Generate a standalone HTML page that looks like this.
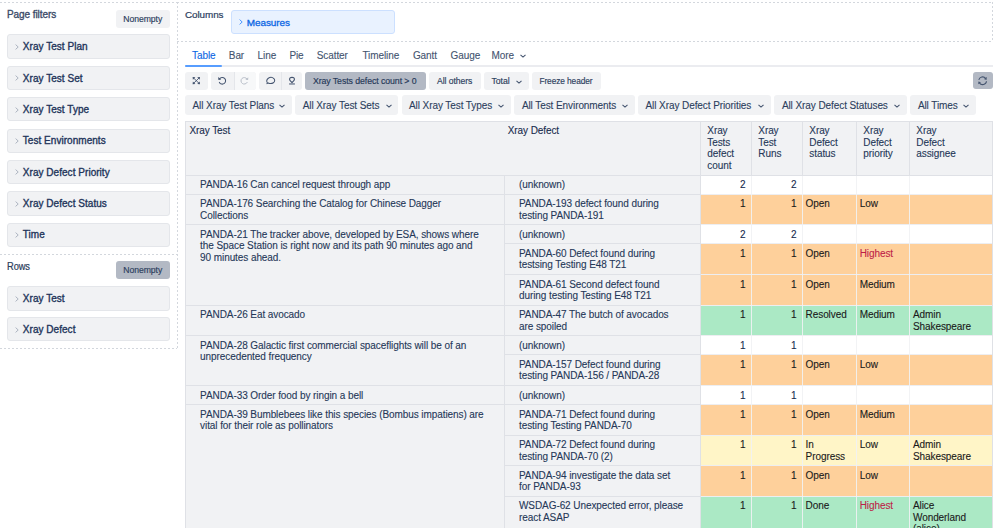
<!DOCTYPE html>
<html><head><meta charset="utf-8"><style>
html,body{margin:0;padding:0;background:#fff;width:999px;height:528px;overflow:hidden;position:relative}
body{font-family:"Liberation Sans",sans-serif;color:#172B4D;font-size:10px;letter-spacing:-0.08px;-webkit-text-stroke-width:0.1px}
body>div{position:absolute}
.t{white-space:nowrap;line-height:11.6px}
svg{display:block}
</style></head><body>
<div style="left:0px;top:2px;width:177px;height:1px;background:repeating-linear-gradient(90deg,#D3D7DD 0 2px,transparent 2px 4px)"></div>
<div style="left:177px;top:2px;width:1px;height:347px;background:repeating-linear-gradient(180deg,#D3D7DD 0 2px,transparent 2px 4px)"></div>
<div style="left:0px;top:254px;width:177px;height:1px;background:repeating-linear-gradient(90deg,#D3D7DD 0 2px,transparent 2px 4px)"></div>
<div style="left:0px;top:348px;width:177px;height:1px;background:repeating-linear-gradient(90deg,#D3D7DD 0 2px,transparent 2px 4px)"></div>
<div class="t" style="left:7px;top:9.2px;font-size:10px;color:#3B4B68;-webkit-text-stroke:0.34px #3B4B68">Page filters</div>
<div style="left:115.5px;top:10px;width:54.5px;height:17.5px;background:#F1F2F4;border-radius:3px"></div>
<div class="t" style="left:115.5px;top:13.6px;width:54.5px;text-align:center;font-size:8.67px;color:#2C3E5D;-webkit-text-stroke:0.15px #2C3E5D">Nonempty</div>
<div style="left:7px;top:34.4px;width:163px;height:24.3px;background:#F1F2F4;border:1px solid #E4E6EA;border-radius:3px;box-sizing:border-box"></div>
<div style="left:15px;top:43.8px;width:4px;height:6px;color:#A5ADBA"><svg width="4" height="6" viewBox="0 0 4 6"><path d="M0.6 0.6 L3.2 3 L0.6 5.4" fill="none" stroke="currentColor" stroke-width="0.9"/></svg></div>
<div class="t" style="left:22.8px;top:41.4px;font-size:10px;color:#22345A;-webkit-text-stroke:0.34px #22345A;letter-spacing:0.04px">Xray Test Plan</div>
<div style="left:7px;top:65.8px;width:163px;height:24.3px;background:#F1F2F4;border:1px solid #E4E6EA;border-radius:3px;box-sizing:border-box"></div>
<div style="left:15px;top:75.2px;width:4px;height:6px;color:#A5ADBA"><svg width="4" height="6" viewBox="0 0 4 6"><path d="M0.6 0.6 L3.2 3 L0.6 5.4" fill="none" stroke="currentColor" stroke-width="0.9"/></svg></div>
<div class="t" style="left:22.8px;top:73.4px;font-size:10px;color:#22345A;-webkit-text-stroke:0.34px #22345A;letter-spacing:0.04px">Xray Test Set</div>
<div style="left:7px;top:97.19999999999999px;width:163px;height:24.3px;background:#F1F2F4;border:1px solid #E4E6EA;border-radius:3px;box-sizing:border-box"></div>
<div style="left:15px;top:106.6px;width:4px;height:6px;color:#A5ADBA"><svg width="4" height="6" viewBox="0 0 4 6"><path d="M0.6 0.6 L3.2 3 L0.6 5.4" fill="none" stroke="currentColor" stroke-width="0.9"/></svg></div>
<div class="t" style="left:22.8px;top:104.4px;font-size:10px;color:#22345A;-webkit-text-stroke:0.34px #22345A;letter-spacing:0.04px">Xray Test Type</div>
<div style="left:7px;top:128.6px;width:163px;height:24.3px;background:#F1F2F4;border:1px solid #E4E6EA;border-radius:3px;box-sizing:border-box"></div>
<div style="left:15px;top:138.0px;width:4px;height:6px;color:#A5ADBA"><svg width="4" height="6" viewBox="0 0 4 6"><path d="M0.6 0.6 L3.2 3 L0.6 5.4" fill="none" stroke="currentColor" stroke-width="0.9"/></svg></div>
<div class="t" style="left:22.8px;top:135.4px;font-size:10px;color:#22345A;-webkit-text-stroke:0.34px #22345A;letter-spacing:0.04px">Test Environments</div>
<div style="left:7px;top:160.0px;width:163px;height:24.3px;background:#F1F2F4;border:1px solid #E4E6EA;border-radius:3px;box-sizing:border-box"></div>
<div style="left:15px;top:169.4px;width:4px;height:6px;color:#A5ADBA"><svg width="4" height="6" viewBox="0 0 4 6"><path d="M0.6 0.6 L3.2 3 L0.6 5.4" fill="none" stroke="currentColor" stroke-width="0.9"/></svg></div>
<div class="t" style="left:22.8px;top:167.4px;font-size:10px;color:#22345A;-webkit-text-stroke:0.34px #22345A;letter-spacing:0.04px">Xray Defect Priority</div>
<div style="left:7px;top:191.4px;width:163px;height:24.3px;background:#F1F2F4;border:1px solid #E4E6EA;border-radius:3px;box-sizing:border-box"></div>
<div style="left:15px;top:200.8px;width:4px;height:6px;color:#A5ADBA"><svg width="4" height="6" viewBox="0 0 4 6"><path d="M0.6 0.6 L3.2 3 L0.6 5.4" fill="none" stroke="currentColor" stroke-width="0.9"/></svg></div>
<div class="t" style="left:22.8px;top:198.4px;font-size:10px;color:#22345A;-webkit-text-stroke:0.34px #22345A;letter-spacing:0.04px">Xray Defect Status</div>
<div style="left:7px;top:222.79999999999998px;width:163px;height:24.3px;background:#F1F2F4;border:1px solid #E4E6EA;border-radius:3px;box-sizing:border-box"></div>
<div style="left:15px;top:232.2px;width:4px;height:6px;color:#A5ADBA"><svg width="4" height="6" viewBox="0 0 4 6"><path d="M0.6 0.6 L3.2 3 L0.6 5.4" fill="none" stroke="currentColor" stroke-width="0.9"/></svg></div>
<div class="t" style="left:22.8px;top:229.4px;font-size:10px;color:#22345A;-webkit-text-stroke:0.34px #22345A;letter-spacing:0.04px">Time</div>
<div class="t" style="left:7px;top:261.3px;font-size:9.3px;color:#2C3E5D;-webkit-text-stroke:0.2px #2C3E5D;transform:scaleY(1.12);transform-origin:0 0">Rows</div>
<div style="left:115.5px;top:261.3px;width:54.5px;height:17.5px;background:#B3B9C4;border-radius:3px"></div>
<div class="t" style="left:115.5px;top:264.6px;width:54.5px;text-align:center;font-size:8.67px;color:#2C3E5D;-webkit-text-stroke:0.15px #2C3E5D">Nonempty</div>
<div style="left:7px;top:286.3px;width:163px;height:24.3px;background:#F1F2F4;border:1px solid #E4E6EA;border-radius:3px;box-sizing:border-box"></div>
<div style="left:15px;top:295.7px;width:4px;height:6px;color:#A5ADBA"><svg width="4" height="6" viewBox="0 0 4 6"><path d="M0.6 0.6 L3.2 3 L0.6 5.4" fill="none" stroke="currentColor" stroke-width="0.9"/></svg></div>
<div class="t" style="left:22.8px;top:293.4px;font-size:10px;color:#22345A;-webkit-text-stroke:0.34px #22345A;letter-spacing:0.04px">Xray Test</div>
<div style="left:7px;top:317.2px;width:163px;height:24.3px;background:#F1F2F4;border:1px solid #E4E6EA;border-radius:3px;box-sizing:border-box"></div>
<div style="left:15px;top:326.59999999999997px;width:4px;height:6px;color:#A5ADBA"><svg width="4" height="6" viewBox="0 0 4 6"><path d="M0.6 0.6 L3.2 3 L0.6 5.4" fill="none" stroke="currentColor" stroke-width="0.9"/></svg></div>
<div class="t" style="left:22.8px;top:324.4px;font-size:10px;color:#22345A;-webkit-text-stroke:0.34px #22345A;letter-spacing:0.04px">Xray Defect</div>
<div style="left:177px;top:2px;width:816px;height:1px;background:repeating-linear-gradient(90deg,#D3D7DD 0 2px,transparent 2px 4px)"></div>
<div style="left:992px;top:2px;width:1px;height:40px;background:repeating-linear-gradient(180deg,#D3D7DD 0 2px,transparent 2px 4px)"></div>
<div style="left:177px;top:41px;width:816px;height:1px;background:repeating-linear-gradient(90deg,#D3D7DD 0 2px,transparent 2px 4px)"></div>
<div class="t" style="left:185px;top:9.2px;font-size:9.9px;color:#2C3E5D;-webkit-text-stroke:0.2px #2C3E5D">Columns</div>
<div style="left:231px;top:10px;width:163.5px;height:24px;background:#E9F2FF;border:1px solid #CCE0FF;border-radius:3px;box-sizing:border-box"></div>
<div style="left:239px;top:19px;width:4px;height:6px;color:#388BFF"><svg width="4" height="6" viewBox="0 0 4 6"><path d="M0.6 0.6 L3.2 3 L0.6 5.4" fill="none" stroke="currentColor" stroke-width="0.9"/></svg></div>
<div class="t" style="left:246.8px;top:16.8px;font-size:9.95px;color:#0C66E4;-webkit-text-stroke:0.3px #0C66E4">Measures</div>
<div class="t" style="left:192.1px;top:50.3px;font-size:10px;letter-spacing:-0.08px;-webkit-text-stroke-width:0.1px;color:#0C66E4">Table</div>
<div class="t" style="left:228.8px;top:50.3px;font-size:10px;letter-spacing:-0.08px;-webkit-text-stroke-width:0.1px;color:#44546F">Bar</div>
<div class="t" style="left:257.6px;top:50.3px;font-size:10px;letter-spacing:-0.08px;-webkit-text-stroke-width:0.1px;color:#44546F">Line</div>
<div class="t" style="left:289.4px;top:50.3px;font-size:10px;letter-spacing:-0.08px;-webkit-text-stroke-width:0.1px;color:#44546F">Pie</div>
<div class="t" style="left:316.7px;top:50.3px;font-size:10px;letter-spacing:-0.08px;-webkit-text-stroke-width:0.1px;color:#44546F">Scatter</div>
<div class="t" style="left:362.4px;top:50.3px;font-size:10px;letter-spacing:-0.08px;-webkit-text-stroke-width:0.1px;color:#44546F">Timeline</div>
<div class="t" style="left:412.9px;top:50.3px;font-size:10px;letter-spacing:-0.08px;-webkit-text-stroke-width:0.1px;color:#44546F">Gantt</div>
<div class="t" style="left:450.6px;top:50.3px;font-size:10px;letter-spacing:-0.08px;-webkit-text-stroke-width:0.1px;color:#44546F">Gauge</div>
<div class="t" style="left:491.6px;top:50.3px;font-size:10px;letter-spacing:-0.08px;-webkit-text-stroke-width:0.1px;color:#44546F">More</div>
<div style="left:519.5px;top:53.5px;width:6px;height:4px;color:#44546F"><svg width="6" height="4" viewBox="0 0 6 4"><path d="M0.5 0.8 L3 3.1 L5.5 0.8" fill="none" stroke="currentColor" stroke-width="1.1"/></svg></div>
<div style="left:185px;top:65.2px;width:808px;height:2px;background:#EBECF0"></div>
<div style="left:185px;top:65px;width:37px;height:2px;background:#579DFF;border-radius:1px"></div>
<div style="left:185px;top:72px;width:22.5px;height:17.5px;background:#F1F2F4;border-radius:3px"></div>
<div style="left:211px;top:72px;width:44.5px;height:17.5px;background:#F1F2F4;border-radius:3px"></div>
<div style="left:233.5px;top:72px;width:22px;height:17.5px;background:#F7F8F9;border-radius:0 3px 3px 0;border-left:1px solid #E4E6EA;box-sizing:border-box"></div>
<div style="left:259px;top:72px;width:43px;height:17.5px;background:#F1F2F4;border-radius:3px"></div>
<div style="left:281.3px;top:72px;width:1px;height:17.5px;background:#E4E6EA"></div>
<div style="left:188px;top:73px;width:16px;height:16px"><svg width="16" height="16" viewBox="0 0 16 16"><path d="M5.6 5 L11 10.3 M11 5 L5.6 10.3" stroke="#44546F" stroke-width="0.9" fill="none"/><path d="M4.6 4 L7.4 4.3 L4.9 6.8 Z M12 4 L9.2 4.3 L11.7 6.8 Z M4.6 11.3 L7.4 11 L4.9 8.5 Z M12 11.3 L9.2 11 L11.7 8.5 Z" fill="#44546F"/></svg></div>
<div style="left:214px;top:73px;width:16px;height:16px"><svg width="16" height="16" viewBox="0 0 16 16"><path d="M5.6 5.9 A3.3 3.3 0 1 1 5.4 9.4" stroke="#44546F" stroke-width="1.05" fill="none" stroke-linecap="round"/><path d="M4.2 4.1 L4.4 7 L7.2 6.6 Z" fill="#44546F"/></svg></div>
<div style="left:237px;top:73px;width:16px;height:16px"><svg width="16" height="16" viewBox="0 0 16 16"><path d="M10 5.9 A3.3 3.3 0 1 0 10.2 9.4" stroke="#B9BFC9" stroke-width="1" fill="none" stroke-linecap="round"/><path d="M11.3 4.3 L11.1 7.1 L8.4 6.7 Z" fill="#B9BFC9"/></svg></div>
<div style="left:262px;top:73px;width:16px;height:16px"><svg width="16" height="16" viewBox="0 0 16 16"><path d="M5.6 10.1 C4.3 8.9 4.4 6.4 6.3 5.2 C8 4.1 10.6 4.3 11.9 5.6 C13.1 6.8 12.9 8.7 11.4 9.7 C9.9 10.7 7.6 10.6 6.3 10 L4.9 10.6 Z" stroke="#44546F" stroke-width="1.05" fill="none" stroke-linejoin="round"/></svg></div>
<div style="left:284px;top:73px;width:16px;height:16px"><svg width="16" height="16" viewBox="0 0 16 16"><path d="M8 4.3 C6.3 4.3 5.5 5.3 5.6 6.5 C5.7 7.3 6.4 8 7.1 8.7 L8 9.6 L8.9 8.7 C9.6 8 10.3 7.3 10.4 6.5 C10.5 5.3 9.7 4.3 8 4.3 Z" stroke="#44546F" stroke-width="1.15" fill="none"/><rect x="5.1" y="10.3" width="5.8" height="1.3" fill="#6B778C"/></svg></div>
<div class="t" style="left:0px;top:0px;"></div>
<div style="left:305.3px;top:72px;width:121px;height:17.5px;background:#B3B9C4;border-radius:3px"></div>
<div class="t" style="left:312.9px;top:75.5px;font-size:8.78px;color:#253858;-webkit-text-stroke-width:0.15px">Xray Tests defect count &gt; 0</div>
<div style="left:429.4px;top:72px;width:51.2px;height:17.5px;background:#F1F2F4;border-radius:3px"></div>
<div class="t" style="left:437px;top:75.5px;font-size:8.64px;color:#2C3E5D;-webkit-text-stroke-width:0.15px">All others</div>
<div style="left:484px;top:72px;width:44.6px;height:17.5px;background:#F1F2F4;border-radius:3px"></div>
<div class="t" style="left:491.6px;top:75.5px;font-size:8.7px;color:#2C3E5D;-webkit-text-stroke-width:0.15px">Total</div>
<div style="left:516px;top:79.5px;width:6px;height:4px;color:#44546F"><svg width="6" height="4" viewBox="0 0 6 4"><path d="M0.5 0.8 L3 3.1 L5.5 0.8" fill="none" stroke="currentColor" stroke-width="1.1"/></svg></div>
<div style="left:531.6px;top:72px;width:69.8px;height:17.5px;background:#F1F2F4;border-radius:3px"></div>
<div class="t" style="left:539.4px;top:75.5px;font-size:8.33px;color:#2C3E5D;-webkit-text-stroke-width:0.15px">Freeze header</div>
<div style="left:973px;top:72.3px;width:19.6px;height:16.8px;background:#B3B9C4;border-radius:3px"></div>
<div style="left:972px;top:71px;width:22px;height:20px"><svg width="22" height="20" viewBox="0 0 22 20"><path d="M6.8 8.9 A3.9 3.9 0 0 1 13.6 7.3" stroke="#44546F" stroke-width="1.05" fill="none"/><path d="M14.5 10.2 A3.9 3.9 0 0 1 7.4 11.9" stroke="#44546F" stroke-width="1.05" fill="none"/><path d="M14.8 6 L14.5 8.9 L11.9 7.9 Z M6.2 13.3 L6.4 10.4 L9 11.3 Z" fill="#44546F"/></svg></div>
<div style="left:185px;top:95.4px;width:107.10000000000002px;height:19.5px;background:#F1F2F4;border-radius:3px"></div>
<div class="t" style="left:192.5px;top:100.3px;font-size:10px;letter-spacing:-0.08px;-webkit-text-stroke-width:0.1px;color:#2C3E5D">All Xray Test Plans</div>
<div style="left:279.1px;top:103.5px;width:6px;height:4px;color:#44546F"><svg width="6" height="4" viewBox="0 0 6 4"><path d="M0.5 0.8 L3 3.1 L5.5 0.8" fill="none" stroke="currentColor" stroke-width="1.1"/></svg></div>
<div style="left:295.2px;top:95.4px;width:103.30000000000001px;height:19.5px;background:#F1F2F4;border-radius:3px"></div>
<div class="t" style="left:302.7px;top:100.3px;font-size:10px;letter-spacing:-0.08px;-webkit-text-stroke-width:0.1px;color:#2C3E5D">All Xray Test Sets</div>
<div style="left:385.5px;top:103.5px;width:6px;height:4px;color:#44546F"><svg width="6" height="4" viewBox="0 0 6 4"><path d="M0.5 0.8 L3 3.1 L5.5 0.8" fill="none" stroke="currentColor" stroke-width="1.1"/></svg></div>
<div style="left:401.5px;top:95.4px;width:109.5px;height:19.5px;background:#F1F2F4;border-radius:3px"></div>
<div class="t" style="left:409.0px;top:100.3px;font-size:10px;letter-spacing:-0.08px;-webkit-text-stroke-width:0.1px;color:#2C3E5D">All Xray Test Types</div>
<div style="left:498px;top:103.5px;width:6px;height:4px;color:#44546F"><svg width="6" height="4" viewBox="0 0 6 4"><path d="M0.5 0.8 L3 3.1 L5.5 0.8" fill="none" stroke="currentColor" stroke-width="1.1"/></svg></div>
<div style="left:514.4px;top:95.4px;width:120.60000000000002px;height:19.5px;background:#F1F2F4;border-radius:3px"></div>
<div class="t" style="left:521.9px;top:100.3px;font-size:10px;letter-spacing:-0.08px;-webkit-text-stroke-width:0.1px;color:#2C3E5D">All Test Environments</div>
<div style="left:622px;top:103.5px;width:6px;height:4px;color:#44546F"><svg width="6" height="4" viewBox="0 0 6 4"><path d="M0.5 0.8 L3 3.1 L5.5 0.8" fill="none" stroke="currentColor" stroke-width="1.1"/></svg></div>
<div style="left:638px;top:95.4px;width:133.39999999999998px;height:19.5px;background:#F1F2F4;border-radius:3px"></div>
<div class="t" style="left:645.5px;top:100.3px;font-size:10px;letter-spacing:-0.08px;-webkit-text-stroke-width:0.1px;color:#2C3E5D">All Xray Defect Priorities</div>
<div style="left:758.4px;top:103.5px;width:6px;height:4px;color:#44546F"><svg width="6" height="4" viewBox="0 0 6 4"><path d="M0.5 0.8 L3 3.1 L5.5 0.8" fill="none" stroke="currentColor" stroke-width="1.1"/></svg></div>
<div style="left:774.4px;top:95.4px;width:132.60000000000002px;height:19.5px;background:#F1F2F4;border-radius:3px"></div>
<div class="t" style="left:781.9px;top:100.3px;font-size:10px;letter-spacing:-0.08px;-webkit-text-stroke-width:0.1px;color:#2C3E5D">All Xray Defect Statuses</div>
<div style="left:894px;top:103.5px;width:6px;height:4px;color:#44546F"><svg width="6" height="4" viewBox="0 0 6 4"><path d="M0.5 0.8 L3 3.1 L5.5 0.8" fill="none" stroke="currentColor" stroke-width="1.1"/></svg></div>
<div style="left:910.4px;top:95.4px;width:65.89999999999998px;height:19.5px;background:#F1F2F4;border-radius:3px"></div>
<div class="t" style="left:917.9px;top:100.3px;font-size:10px;letter-spacing:-0.08px;-webkit-text-stroke-width:0.1px;color:#2C3E5D">All Times</div>
<div style="left:963.3px;top:103.5px;width:6px;height:4px;color:#44546F"><svg width="6" height="4" viewBox="0 0 6 4"><path d="M0.5 0.8 L3 3.1 L5.5 0.8" fill="none" stroke="currentColor" stroke-width="1.1"/></svg></div>
<div style="left:185px;top:121.3px;width:807.2px;height:53.89999999999999px;background:#F1F2F4"></div>
<div class="t" style="left:189.4px;top:125.3px;font-size:10px;letter-spacing:-0.08px;-webkit-text-stroke-width:0.1px">Xray Test</div>
<div class="t" style="left:507.7px;top:125.3px;font-size:10px;letter-spacing:-0.08px;-webkit-text-stroke-width:0.1px">Xray Defect</div>
<div class="t" style="left:707.3px;top:125.30px;font-size:10px;letter-spacing:-0.08px;color:#253858">Xray</div>
<div class="t" style="left:707.3px;top:136.80px;font-size:10px;letter-spacing:-0.08px;color:#253858">Tests</div>
<div class="t" style="left:707.3px;top:148.30px;font-size:10px;letter-spacing:-0.08px;color:#253858">defect</div>
<div class="t" style="left:707.3px;top:159.80px;font-size:10px;letter-spacing:-0.08px;color:#253858">count</div>
<div class="t" style="left:758.3px;top:125.30px;font-size:10px;letter-spacing:-0.08px;color:#253858">Xray</div>
<div class="t" style="left:758.3px;top:136.80px;font-size:10px;letter-spacing:-0.08px;color:#253858">Test</div>
<div class="t" style="left:758.3px;top:148.30px;font-size:10px;letter-spacing:-0.08px;color:#253858">Runs</div>
<div class="t" style="left:809.3px;top:125.30px;font-size:10px;letter-spacing:-0.08px;color:#253858">Xray</div>
<div class="t" style="left:809.3px;top:136.80px;font-size:10px;letter-spacing:-0.08px;color:#253858">Defect</div>
<div class="t" style="left:809.3px;top:148.30px;font-size:10px;letter-spacing:-0.08px;color:#253858">status</div>
<div class="t" style="left:863.3px;top:125.30px;font-size:10px;letter-spacing:-0.08px;color:#253858">Xray</div>
<div class="t" style="left:863.3px;top:136.80px;font-size:10px;letter-spacing:-0.08px;color:#253858">Defect</div>
<div class="t" style="left:863.3px;top:148.30px;font-size:10px;letter-spacing:-0.08px;color:#253858">priority</div>
<div class="t" style="left:916.3px;top:125.30px;font-size:10px;letter-spacing:-0.08px;color:#253858">Xray</div>
<div class="t" style="left:916.3px;top:136.80px;font-size:10px;letter-spacing:-0.08px;color:#253858">Defect</div>
<div class="t" style="left:916.3px;top:148.30px;font-size:10px;letter-spacing:-0.08px;color:#253858">assignee</div>
<div style="left:185px;top:175.2px;width:515px;height:352.8px;background:#F1F2F4"></div>
<div style="left:700px;top:175.2px;width:292.2px;height:18.80000000000001px;background:#FFFFFF"></div>
<div class="t" style="left:700px;top:179.29999999999998px;width:45.6px;text-align:right;font-size:10px;letter-spacing:-0.08px;-webkit-text-stroke-width:0.1px;color:#172B4D">2</div>
<div class="t" style="left:751px;top:179.29999999999998px;width:45.6px;text-align:right;font-size:10px;letter-spacing:-0.08px;-webkit-text-stroke-width:0.1px;color:#172B4D">2</div>
<div class="t" style="left:805.6px;top:179.29999999999998px;font-size:10px;letter-spacing:-0.08px;color:#253858;color:#172B4D"></div>
<div class="t" style="left:859.7px;top:179.29999999999998px;font-size:10px;letter-spacing:-0.08px;color:#253858;color:#172B4D"></div>
<div class="t" style="left:913px;top:179.29999999999998px;font-size:10px;letter-spacing:-0.08px;color:#253858;color:#172B4D"></div>
<div class="t" style="left:519px;top:179.29999999999998px;font-size:10px;letter-spacing:-0.08px;color:#253858">(unknown)</div>
<div style="left:504px;top:174.7px;width:196px;height:1px;background:#DFE1E6"></div>
<div style="left:700px;top:174.7px;width:292.2px;height:1px;background:#EDEEF1"></div>
<div style="left:700px;top:194.0px;width:292.2px;height:30.599999999999994px;background:#FED09B"></div>
<div class="t" style="left:700px;top:198.1px;width:45.6px;text-align:right;font-size:10px;letter-spacing:-0.08px;-webkit-text-stroke-width:0.1px;color:#1A1A1A">1</div>
<div class="t" style="left:751px;top:198.1px;width:45.6px;text-align:right;font-size:10px;letter-spacing:-0.08px;-webkit-text-stroke-width:0.1px;color:#1A1A1A">1</div>
<div class="t" style="left:805.6px;top:198.1px;font-size:10px;letter-spacing:-0.08px;color:#253858;color:#1A1A1A">Open</div>
<div class="t" style="left:859.7px;top:198.1px;font-size:10px;letter-spacing:-0.08px;color:#253858;color:#1A1A1A">Low</div>
<div class="t" style="left:913px;top:198.1px;font-size:10px;letter-spacing:-0.08px;color:#253858;color:#1A1A1A"></div>
<div class="t" style="left:519px;top:198.10px;font-size:10px;letter-spacing:-0.08px;color:#253858">PANDA-193 defect found during</div>
<div class="t" style="left:519px;top:209.60px;font-size:10px;letter-spacing:-0.08px;color:#253858">testing PANDA-191</div>
<div style="left:504px;top:193.5px;width:196px;height:1px;background:#DFE1E6"></div>
<div style="left:700px;top:193.5px;width:292.2px;height:1px;background:#EDEEF1"></div>
<div style="left:700px;top:224.6px;width:292.2px;height:19.0px;background:#FFFFFF"></div>
<div class="t" style="left:700px;top:228.7px;width:45.6px;text-align:right;font-size:10px;letter-spacing:-0.08px;-webkit-text-stroke-width:0.1px;color:#172B4D">2</div>
<div class="t" style="left:751px;top:228.7px;width:45.6px;text-align:right;font-size:10px;letter-spacing:-0.08px;-webkit-text-stroke-width:0.1px;color:#172B4D">2</div>
<div class="t" style="left:805.6px;top:228.7px;font-size:10px;letter-spacing:-0.08px;color:#253858;color:#172B4D"></div>
<div class="t" style="left:859.7px;top:228.7px;font-size:10px;letter-spacing:-0.08px;color:#253858;color:#172B4D"></div>
<div class="t" style="left:913px;top:228.7px;font-size:10px;letter-spacing:-0.08px;color:#253858;color:#172B4D"></div>
<div class="t" style="left:519px;top:228.7px;font-size:10px;letter-spacing:-0.08px;color:#253858">(unknown)</div>
<div style="left:504px;top:224.1px;width:196px;height:1px;background:#DFE1E6"></div>
<div style="left:700px;top:224.1px;width:292.2px;height:1px;background:#EDEEF1"></div>
<div style="left:700px;top:243.6px;width:292.2px;height:30.900000000000006px;background:#FED09B"></div>
<div class="t" style="left:700px;top:247.7px;width:45.6px;text-align:right;font-size:10px;letter-spacing:-0.08px;-webkit-text-stroke-width:0.1px;color:#1A1A1A">1</div>
<div class="t" style="left:751px;top:247.7px;width:45.6px;text-align:right;font-size:10px;letter-spacing:-0.08px;-webkit-text-stroke-width:0.1px;color:#1A1A1A">1</div>
<div class="t" style="left:805.6px;top:247.7px;font-size:10px;letter-spacing:-0.08px;color:#253858;color:#1A1A1A">Open</div>
<div class="t" style="left:859.7px;top:247.7px;font-size:10px;letter-spacing:-0.08px;color:#253858;color:#1A1A1A"><span style="color:#BE1F48">Highest</span></div>
<div class="t" style="left:913px;top:247.7px;font-size:10px;letter-spacing:-0.08px;color:#253858;color:#1A1A1A"></div>
<div class="t" style="left:519px;top:247.70px;font-size:10px;letter-spacing:-0.08px;color:#253858">PANDA-60 Defect found during</div>
<div class="t" style="left:519px;top:259.20px;font-size:10px;letter-spacing:-0.08px;color:#253858">testsing Testing E48 T21</div>
<div style="left:504px;top:243.1px;width:196px;height:1px;background:#DFE1E6"></div>
<div style="left:700px;top:243.1px;width:292.2px;height:1px;background:#EDEEF1"></div>
<div style="left:700px;top:274.5px;width:292.2px;height:30.69999999999999px;background:#FED09B"></div>
<div class="t" style="left:700px;top:278.6px;width:45.6px;text-align:right;font-size:10px;letter-spacing:-0.08px;-webkit-text-stroke-width:0.1px;color:#1A1A1A">1</div>
<div class="t" style="left:751px;top:278.6px;width:45.6px;text-align:right;font-size:10px;letter-spacing:-0.08px;-webkit-text-stroke-width:0.1px;color:#1A1A1A">1</div>
<div class="t" style="left:805.6px;top:278.6px;font-size:10px;letter-spacing:-0.08px;color:#253858;color:#1A1A1A">Open</div>
<div class="t" style="left:859.7px;top:278.6px;font-size:10px;letter-spacing:-0.08px;color:#253858;color:#1A1A1A">Medium</div>
<div class="t" style="left:913px;top:278.6px;font-size:10px;letter-spacing:-0.08px;color:#253858;color:#1A1A1A"></div>
<div class="t" style="left:519px;top:278.60px;font-size:10px;letter-spacing:-0.08px;color:#253858">PANDA-61 Second defect found</div>
<div class="t" style="left:519px;top:290.10px;font-size:10px;letter-spacing:-0.08px;color:#253858">during testing Testing E48 T21</div>
<div style="left:504px;top:274.0px;width:196px;height:1px;background:#DFE1E6"></div>
<div style="left:700px;top:274.0px;width:292.2px;height:1px;background:#EDEEF1"></div>
<div style="left:700px;top:305.2px;width:292.2px;height:30.19999999999999px;background:#ABE9C5"></div>
<div class="t" style="left:700px;top:309.3px;width:45.6px;text-align:right;font-size:10px;letter-spacing:-0.08px;-webkit-text-stroke-width:0.1px;color:#1A1A1A">1</div>
<div class="t" style="left:751px;top:309.3px;width:45.6px;text-align:right;font-size:10px;letter-spacing:-0.08px;-webkit-text-stroke-width:0.1px;color:#1A1A1A">1</div>
<div class="t" style="left:805.6px;top:309.3px;font-size:10px;letter-spacing:-0.08px;color:#253858;color:#1A1A1A">Resolved</div>
<div class="t" style="left:859.7px;top:309.3px;font-size:10px;letter-spacing:-0.08px;color:#253858;color:#1A1A1A">Medium</div>
<div class="t" style="left:913px;top:309.30px;font-size:10px;letter-spacing:-0.08px;color:#253858;color:#1A1A1A">Admin</div>
<div class="t" style="left:913px;top:320.80px;font-size:10px;letter-spacing:-0.08px;color:#253858;color:#1A1A1A">Shakespeare</div>
<div class="t" style="left:519px;top:309.30px;font-size:10px;letter-spacing:-0.08px;color:#253858">PANDA-47 The butch of avocados</div>
<div class="t" style="left:519px;top:320.80px;font-size:10px;letter-spacing:-0.08px;color:#253858">are spoiled</div>
<div style="left:504px;top:304.7px;width:196px;height:1px;background:#DFE1E6"></div>
<div style="left:700px;top:304.7px;width:292.2px;height:1px;background:#EDEEF1"></div>
<div style="left:700px;top:335.4px;width:292.2px;height:19.200000000000045px;background:#FFFFFF"></div>
<div class="t" style="left:700px;top:339.5px;width:45.6px;text-align:right;font-size:10px;letter-spacing:-0.08px;-webkit-text-stroke-width:0.1px;color:#172B4D">1</div>
<div class="t" style="left:751px;top:339.5px;width:45.6px;text-align:right;font-size:10px;letter-spacing:-0.08px;-webkit-text-stroke-width:0.1px;color:#172B4D">1</div>
<div class="t" style="left:805.6px;top:339.5px;font-size:10px;letter-spacing:-0.08px;color:#253858;color:#172B4D"></div>
<div class="t" style="left:859.7px;top:339.5px;font-size:10px;letter-spacing:-0.08px;color:#253858;color:#172B4D"></div>
<div class="t" style="left:913px;top:339.5px;font-size:10px;letter-spacing:-0.08px;color:#253858;color:#172B4D"></div>
<div class="t" style="left:519px;top:339.5px;font-size:10px;letter-spacing:-0.08px;color:#253858">(unknown)</div>
<div style="left:504px;top:334.9px;width:196px;height:1px;background:#DFE1E6"></div>
<div style="left:700px;top:334.9px;width:292.2px;height:1px;background:#EDEEF1"></div>
<div style="left:700px;top:354.6px;width:292.2px;height:31.0px;background:#FED09B"></div>
<div class="t" style="left:700px;top:358.70000000000005px;width:45.6px;text-align:right;font-size:10px;letter-spacing:-0.08px;-webkit-text-stroke-width:0.1px;color:#1A1A1A">1</div>
<div class="t" style="left:751px;top:358.70000000000005px;width:45.6px;text-align:right;font-size:10px;letter-spacing:-0.08px;-webkit-text-stroke-width:0.1px;color:#1A1A1A">1</div>
<div class="t" style="left:805.6px;top:358.70000000000005px;font-size:10px;letter-spacing:-0.08px;color:#253858;color:#1A1A1A">Open</div>
<div class="t" style="left:859.7px;top:358.70000000000005px;font-size:10px;letter-spacing:-0.08px;color:#253858;color:#1A1A1A">Low</div>
<div class="t" style="left:913px;top:358.70000000000005px;font-size:10px;letter-spacing:-0.08px;color:#253858;color:#1A1A1A"></div>
<div class="t" style="left:519px;top:358.70px;font-size:10px;letter-spacing:-0.08px;color:#253858">PANDA-157 Defect found during</div>
<div class="t" style="left:519px;top:370.20px;font-size:10px;letter-spacing:-0.08px;color:#253858">testing PANDA-156 / PANDA-28</div>
<div style="left:504px;top:354.1px;width:196px;height:1px;background:#DFE1E6"></div>
<div style="left:700px;top:354.1px;width:292.2px;height:1px;background:#EDEEF1"></div>
<div style="left:700px;top:385.6px;width:292.2px;height:18.799999999999955px;background:#FFFFFF"></div>
<div class="t" style="left:700px;top:389.70000000000005px;width:45.6px;text-align:right;font-size:10px;letter-spacing:-0.08px;-webkit-text-stroke-width:0.1px;color:#172B4D">1</div>
<div class="t" style="left:751px;top:389.70000000000005px;width:45.6px;text-align:right;font-size:10px;letter-spacing:-0.08px;-webkit-text-stroke-width:0.1px;color:#172B4D">1</div>
<div class="t" style="left:805.6px;top:389.70000000000005px;font-size:10px;letter-spacing:-0.08px;color:#253858;color:#172B4D"></div>
<div class="t" style="left:859.7px;top:389.70000000000005px;font-size:10px;letter-spacing:-0.08px;color:#253858;color:#172B4D"></div>
<div class="t" style="left:913px;top:389.70000000000005px;font-size:10px;letter-spacing:-0.08px;color:#253858;color:#172B4D"></div>
<div class="t" style="left:519px;top:389.70000000000005px;font-size:10px;letter-spacing:-0.08px;color:#253858">(unknown)</div>
<div style="left:504px;top:385.1px;width:196px;height:1px;background:#DFE1E6"></div>
<div style="left:700px;top:385.1px;width:292.2px;height:1px;background:#EDEEF1"></div>
<div style="left:700px;top:404.4px;width:292.2px;height:30.900000000000034px;background:#FED09B"></div>
<div class="t" style="left:700px;top:408.5px;width:45.6px;text-align:right;font-size:10px;letter-spacing:-0.08px;-webkit-text-stroke-width:0.1px;color:#1A1A1A">1</div>
<div class="t" style="left:751px;top:408.5px;width:45.6px;text-align:right;font-size:10px;letter-spacing:-0.08px;-webkit-text-stroke-width:0.1px;color:#1A1A1A">1</div>
<div class="t" style="left:805.6px;top:408.5px;font-size:10px;letter-spacing:-0.08px;color:#253858;color:#1A1A1A">Open</div>
<div class="t" style="left:859.7px;top:408.5px;font-size:10px;letter-spacing:-0.08px;color:#253858;color:#1A1A1A">Medium</div>
<div class="t" style="left:913px;top:408.5px;font-size:10px;letter-spacing:-0.08px;color:#253858;color:#1A1A1A"></div>
<div class="t" style="left:519px;top:408.50px;font-size:10px;letter-spacing:-0.08px;color:#253858">PANDA-71 Defect found during</div>
<div class="t" style="left:519px;top:420.00px;font-size:10px;letter-spacing:-0.08px;color:#253858">testing Testing PANDA-70</div>
<div style="left:504px;top:403.9px;width:196px;height:1px;background:#DFE1E6"></div>
<div style="left:700px;top:403.9px;width:292.2px;height:1px;background:#EDEEF1"></div>
<div style="left:700px;top:435.3px;width:292.2px;height:30.30000000000001px;background:#FFF5C7"></div>
<div class="t" style="left:700px;top:439.40000000000003px;width:45.6px;text-align:right;font-size:10px;letter-spacing:-0.08px;-webkit-text-stroke-width:0.1px;color:#1A1A1A">1</div>
<div class="t" style="left:751px;top:439.40000000000003px;width:45.6px;text-align:right;font-size:10px;letter-spacing:-0.08px;-webkit-text-stroke-width:0.1px;color:#1A1A1A">1</div>
<div class="t" style="left:805.6px;top:439.40px;font-size:10px;letter-spacing:-0.08px;color:#253858;color:#1A1A1A">In</div>
<div class="t" style="left:805.6px;top:450.90px;font-size:10px;letter-spacing:-0.08px;color:#253858;color:#1A1A1A">Progress</div>
<div class="t" style="left:859.7px;top:439.40000000000003px;font-size:10px;letter-spacing:-0.08px;color:#253858;color:#1A1A1A">Low</div>
<div class="t" style="left:913px;top:439.40px;font-size:10px;letter-spacing:-0.08px;color:#253858;color:#1A1A1A">Admin</div>
<div class="t" style="left:913px;top:450.90px;font-size:10px;letter-spacing:-0.08px;color:#253858;color:#1A1A1A">Shakespeare</div>
<div class="t" style="left:519px;top:439.40px;font-size:10px;letter-spacing:-0.08px;color:#253858">PANDA-72 Defect found during</div>
<div class="t" style="left:519px;top:450.90px;font-size:10px;letter-spacing:-0.08px;color:#253858">testing PANDA-70 (2)</div>
<div style="left:504px;top:434.8px;width:196px;height:1px;background:#DFE1E6"></div>
<div style="left:700px;top:434.8px;width:292.2px;height:1px;background:#EDEEF1"></div>
<div style="left:700px;top:465.6px;width:292.2px;height:30.599999999999966px;background:#FED09B"></div>
<div class="t" style="left:700px;top:469.70000000000005px;width:45.6px;text-align:right;font-size:10px;letter-spacing:-0.08px;-webkit-text-stroke-width:0.1px;color:#1A1A1A">1</div>
<div class="t" style="left:751px;top:469.70000000000005px;width:45.6px;text-align:right;font-size:10px;letter-spacing:-0.08px;-webkit-text-stroke-width:0.1px;color:#1A1A1A">1</div>
<div class="t" style="left:805.6px;top:469.70000000000005px;font-size:10px;letter-spacing:-0.08px;color:#253858;color:#1A1A1A">Open</div>
<div class="t" style="left:859.7px;top:469.70000000000005px;font-size:10px;letter-spacing:-0.08px;color:#253858;color:#1A1A1A">Low</div>
<div class="t" style="left:913px;top:469.70000000000005px;font-size:10px;letter-spacing:-0.08px;color:#253858;color:#1A1A1A"></div>
<div class="t" style="left:519px;top:469.70px;font-size:10px;letter-spacing:-0.08px;color:#253858">PANDA-94 investigate the data set</div>
<div class="t" style="left:519px;top:481.20px;font-size:10px;letter-spacing:-0.08px;color:#253858">for PANDA-93</div>
<div style="left:504px;top:465.1px;width:196px;height:1px;background:#DFE1E6"></div>
<div style="left:700px;top:465.1px;width:292.2px;height:1px;background:#EDEEF1"></div>
<div style="left:700px;top:496.2px;width:292.2px;height:43.80000000000001px;background:#ABE9C5"></div>
<div class="t" style="left:700px;top:500.3px;width:45.6px;text-align:right;font-size:10px;letter-spacing:-0.08px;-webkit-text-stroke-width:0.1px;color:#1A1A1A">1</div>
<div class="t" style="left:751px;top:500.3px;width:45.6px;text-align:right;font-size:10px;letter-spacing:-0.08px;-webkit-text-stroke-width:0.1px;color:#1A1A1A">1</div>
<div class="t" style="left:805.6px;top:500.3px;font-size:10px;letter-spacing:-0.08px;color:#253858;color:#1A1A1A">Done</div>
<div class="t" style="left:859.7px;top:500.3px;font-size:10px;letter-spacing:-0.08px;color:#253858;color:#1A1A1A"><span style="color:#BE1F48">Highest</span></div>
<div class="t" style="left:913px;top:500.30px;font-size:10px;letter-spacing:-0.08px;color:#253858;color:#1A1A1A">Alice</div>
<div class="t" style="left:913px;top:511.80px;font-size:10px;letter-spacing:-0.08px;color:#253858;color:#1A1A1A">Wonderland</div>
<div class="t" style="left:913px;top:523.30px;font-size:10px;letter-spacing:-0.08px;color:#253858;color:#1A1A1A">(alice)</div>
<div class="t" style="left:519px;top:500.30px;font-size:10px;letter-spacing:-0.08px;color:#253858">WSDAG-62 Unexpected error, please</div>
<div class="t" style="left:519px;top:511.80px;font-size:10px;letter-spacing:-0.08px;color:#253858">react ASAP</div>
<div style="left:504px;top:495.7px;width:196px;height:1px;background:#DFE1E6"></div>
<div style="left:700px;top:495.7px;width:292.2px;height:1px;background:#EDEEF1"></div>
<div class="t" style="left:200.1px;top:179.29999999999998px;font-size:10px;letter-spacing:-0.08px;color:#253858">PANDA-16 Can cancel request through app</div>
<div style="left:185px;top:174.7px;width:319px;height:1px;background:#DFE1E6"></div>
<div class="t" style="left:200.1px;top:198.10px;font-size:10px;letter-spacing:-0.08px;color:#253858">PANDA-176 Searching the Catalog for Chinese Dagger</div>
<div class="t" style="left:200.1px;top:209.60px;font-size:10px;letter-spacing:-0.08px;color:#253858">Collections</div>
<div style="left:185px;top:193.5px;width:319px;height:1px;background:#DFE1E6"></div>
<div class="t" style="left:200.1px;top:228.70px;font-size:10px;letter-spacing:-0.08px;color:#253858">PANDA-21 The tracker above, developed by ESA, shows where</div>
<div class="t" style="left:200.1px;top:240.20px;font-size:10px;letter-spacing:-0.08px;color:#253858">the Space Station is right now and its path 90 minutes ago and</div>
<div class="t" style="left:200.1px;top:251.70px;font-size:10px;letter-spacing:-0.08px;color:#253858">90 minutes ahead.</div>
<div style="left:185px;top:224.1px;width:319px;height:1px;background:#DFE1E6"></div>
<div class="t" style="left:200.1px;top:309.3px;font-size:10px;letter-spacing:-0.08px;color:#253858">PANDA-26 Eat avocado</div>
<div style="left:185px;top:304.7px;width:319px;height:1px;background:#DFE1E6"></div>
<div class="t" style="left:200.1px;top:339.50px;font-size:10px;letter-spacing:-0.08px;color:#253858">PANDA-28 Galactic first commercial spaceflights will be of an</div>
<div class="t" style="left:200.1px;top:351.00px;font-size:10px;letter-spacing:-0.08px;color:#253858">unprecedented frequency</div>
<div style="left:185px;top:334.9px;width:319px;height:1px;background:#DFE1E6"></div>
<div class="t" style="left:200.1px;top:389.70000000000005px;font-size:10px;letter-spacing:-0.08px;color:#253858">PANDA-33 Order food by ringin a bell</div>
<div style="left:185px;top:385.1px;width:319px;height:1px;background:#DFE1E6"></div>
<div class="t" style="left:200.1px;top:408.50px;font-size:10px;letter-spacing:-0.08px;color:#253858">PANDA-39 Bumblebees like this species (Bombus impatiens) are</div>
<div class="t" style="left:200.1px;top:420.00px;font-size:10px;letter-spacing:-0.08px;color:#253858">vital for their role as pollinators</div>
<div style="left:185px;top:403.9px;width:319px;height:1px;background:#DFE1E6"></div>
<div style="left:503.5px;top:175.2px;width:1px;height:352.8px;background:#DFE1E6"></div>
<div style="left:699.5px;top:175.2px;width:1px;height:352.8px;background:#DFE1E6"></div>
<div style="left:750.5px;top:175.2px;width:1px;height:352.8px;background:rgba(241,242,244,0.9)"></div>
<div style="left:801.5px;top:175.2px;width:1px;height:352.8px;background:rgba(241,242,244,0.9)"></div>
<div style="left:855.5px;top:175.2px;width:1px;height:352.8px;background:rgba(241,242,244,0.9)"></div>
<div style="left:908.5px;top:175.2px;width:1px;height:352.8px;background:rgba(241,242,244,0.9)"></div>
<div style="left:699.5px;top:121.3px;width:1px;height:53.89999999999999px;background:#DFE1E6"></div>
<div style="left:750.5px;top:121.3px;width:1px;height:53.89999999999999px;background:#DFE1E6"></div>
<div style="left:801.5px;top:121.3px;width:1px;height:53.89999999999999px;background:#DFE1E6"></div>
<div style="left:855.5px;top:121.3px;width:1px;height:53.89999999999999px;background:#DFE1E6"></div>
<div style="left:908.5px;top:121.3px;width:1px;height:53.89999999999999px;background:#DFE1E6"></div>
<div style="left:184.5px;top:120.8px;width:808.2px;height:1px;background:#DFE1E6"></div>
<div style="left:184.5px;top:121.3px;width:1px;height:406.7px;background:#DFE1E6"></div>
<div style="left:991.7px;top:121.3px;width:1px;height:406.7px;background:#DFE1E6"></div>
<div style="left:185px;top:174.7px;width:807.2px;height:1px;background:#DFE1E6"></div>
</body></html>
